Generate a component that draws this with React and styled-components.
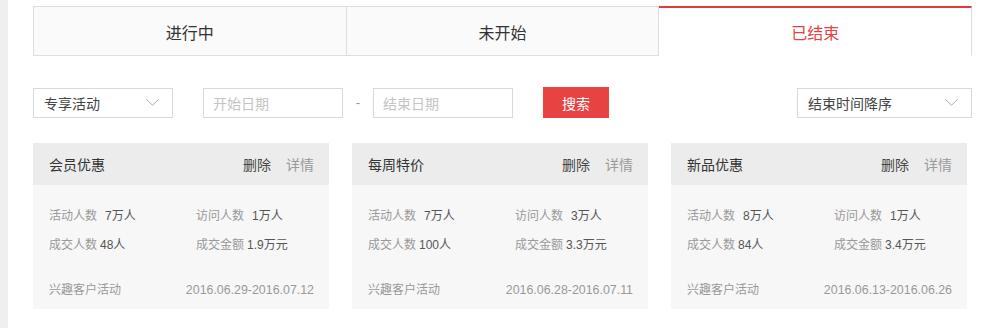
import React from 'react'
import styled, { createGlobalStyle } from 'styled-components'

const GlobalStyle = createGlobalStyle`
  body {
    margin: 0;
    background: #fff;
    font-family: "Liberation Sans", "Noto Sans CJK SC", sans-serif;
  }
`

const Page = styled.div`
  display: flex;
  width: 985px;
  height: 328px;
  overflow: hidden;
`

const SideStrip = styled.div`
  width: 8px;
  background: #efefef;
`

const Main = styled.div`
  flex: 1;
  padding: 6px 13px 0 25px;
`

const Tabs = styled.div`
  display: flex;
  height: 50px;
`

const Tab = styled.div`
  flex: 1;
  display: flex;
  align-items: center;
  justify-content: center;
  font-size: 16px;
  box-sizing: border-box;
  color: ${p => (p.active ? '#e8403f' : '#333')};
  background: ${p => (p.active ? '#fff' : '#fafafa')};
  border: 1px solid #dedede;
  border-left-width: ${p => (p.first ? '1px' : '0')};
  border-top: ${p => (p.active ? '2px solid #e4393c' : '1px solid #dedede')};
  border-bottom: ${p => (p.active ? '1px solid #fff' : '1px solid #dedede')};
  padding-top: ${p => (p.active ? '0' : '1px')};
`

const Filters = styled.div`
  display: flex;
  align-items: center;
  margin-top: 31px;
  height: 31px;
`

const Select = styled.div`
  display: flex;
  align-items: center;
  justify-content: space-between;
  box-sizing: border-box;
  width: ${p => p.w}px;
  height: 30px;
  padding: 0 13px 0 10px;
  border: 1px solid #d9d9d9;
  font-size: 14px;
  color: #444;
  margin-left: ${p => (p.push ? 'auto' : '0')};
`

const DateInput = styled.div`
  display: flex;
  align-items: center;
  box-sizing: border-box;
  width: 140px;
  height: 30px;
  padding: 0 9px;
  border: 1px solid #d9d9d9;
  font-size: 14px;
  color: #c4c4c4;
  margin-left: 30px;
`

const Dash = styled.span`
  width: 30px;
  text-align: center;
  margin-right: -30px;
  font-size: 13px;
  color: #999;
`

const SearchButton = styled.button`
  margin-left: 30px;
  width: 66px;
  height: 31px;
  border: none;
  background: #e84343;
  color: #fff;
  font-family: inherit;
  font-size: 14px;
  padding: 0;
`

const Cards = styled.div`
  display: grid;
  grid-template-columns: repeat(3, 296px);
  column-gap: 23px;
  margin-top: 25px;
`

const Card = styled.div`
  background: #f7f7f7;
  height: 166px;
`

const CardHead = styled.div`
  display: flex;
  align-items: center;
  height: 42px;
  padding: 0 15px 0 16px;
  background: #ececec;
  font-size: 14px;
  color: #333;
`

const CardTitle = styled.span`
  flex: 1;
`

const Action = styled.span`
  margin-left: 15px;
  font-size: 14px;
  color: ${p => (p.muted ? '#9a9a9a' : '#444')};
`

const Stats = styled.div`
  display: grid;
  grid-template-columns: 147px 1fr;
  row-gap: 12px;
  padding: 21px 16px 0;
`

const Stat = styled.div`
  font-size: 12px;
  color: #555;
  white-space: nowrap;
`

const Label = styled.span`
  color: #999;
  margin-right: ${p => (p.gap ? 8 : 3)}px;
`

const CardFoot = styled.div`
  display: flex;
  align-items: baseline;
  justify-content: space-between;
  padding: 28px 15px 0 16px;
  font-size: 12px;
  color: #999;
`

const DateRange = styled.span`
  font-size: 12.4px;
`

const Chevron = () => (
  <svg width="13" height="7" viewBox="0 0 13 7" fill="none">
    <path d="M0.5 0.5 L6.5 6.2 L12.5 0.5" stroke="#aaa" strokeWidth="1" />
  </svg>
)

const cards = [
  { title: '会员优惠', join: '7万人', visit: '1万人', deal: '48人', amount: '1.9万元', date: '2016.06.29-2016.07.12' },
  { title: '每周特价', join: '7万人', visit: '3万人', deal: '100人', amount: '3.3万元', date: '2016.06.28-2016.07.11' },
  { title: '新品优惠', join: '8万人', visit: '1万人', deal: '84人', amount: '3.4万元', date: '2016.06.13-2016.06.26' },
]

export default function App() {
  return (
    <Page>
      <GlobalStyle />
      <SideStrip />
      <Main>
        <Tabs>
          <Tab first>进行中</Tab>
          <Tab>未开始</Tab>
          <Tab active>已结束</Tab>
        </Tabs>
        <Filters>
          <Select w={140}>
            专享活动
            <Chevron />
          </Select>
          <DateInput>开始日期</DateInput>
          <Dash>-</Dash>
          <DateInput>结束日期</DateInput>
          <SearchButton>搜索</SearchButton>
          <Select w={175} push>
            结束时间降序
            <Chevron />
          </Select>
        </Filters>
        <Cards>
          {cards.map(c => (
            <Card key={c.title}>
              <CardHead>
                <CardTitle>{c.title}</CardTitle>
                <Action>删除</Action>
                <Action muted>详情</Action>
              </CardHead>
              <Stats>
                <Stat><Label gap>活动人数</Label>{c.join}</Stat>
                <Stat><Label gap>访问人数</Label>{c.visit}</Stat>
                <Stat><Label>成交人数</Label>{c.deal}</Stat>
                <Stat><Label>成交金额</Label>{c.amount}</Stat>
              </Stats>
              <CardFoot>
                <span>兴趣客户活动</span>
                <DateRange>{c.date}</DateRange>
              </CardFoot>
            </Card>
          ))}
        </Cards>
      </Main>
    </Page>
  )
}
